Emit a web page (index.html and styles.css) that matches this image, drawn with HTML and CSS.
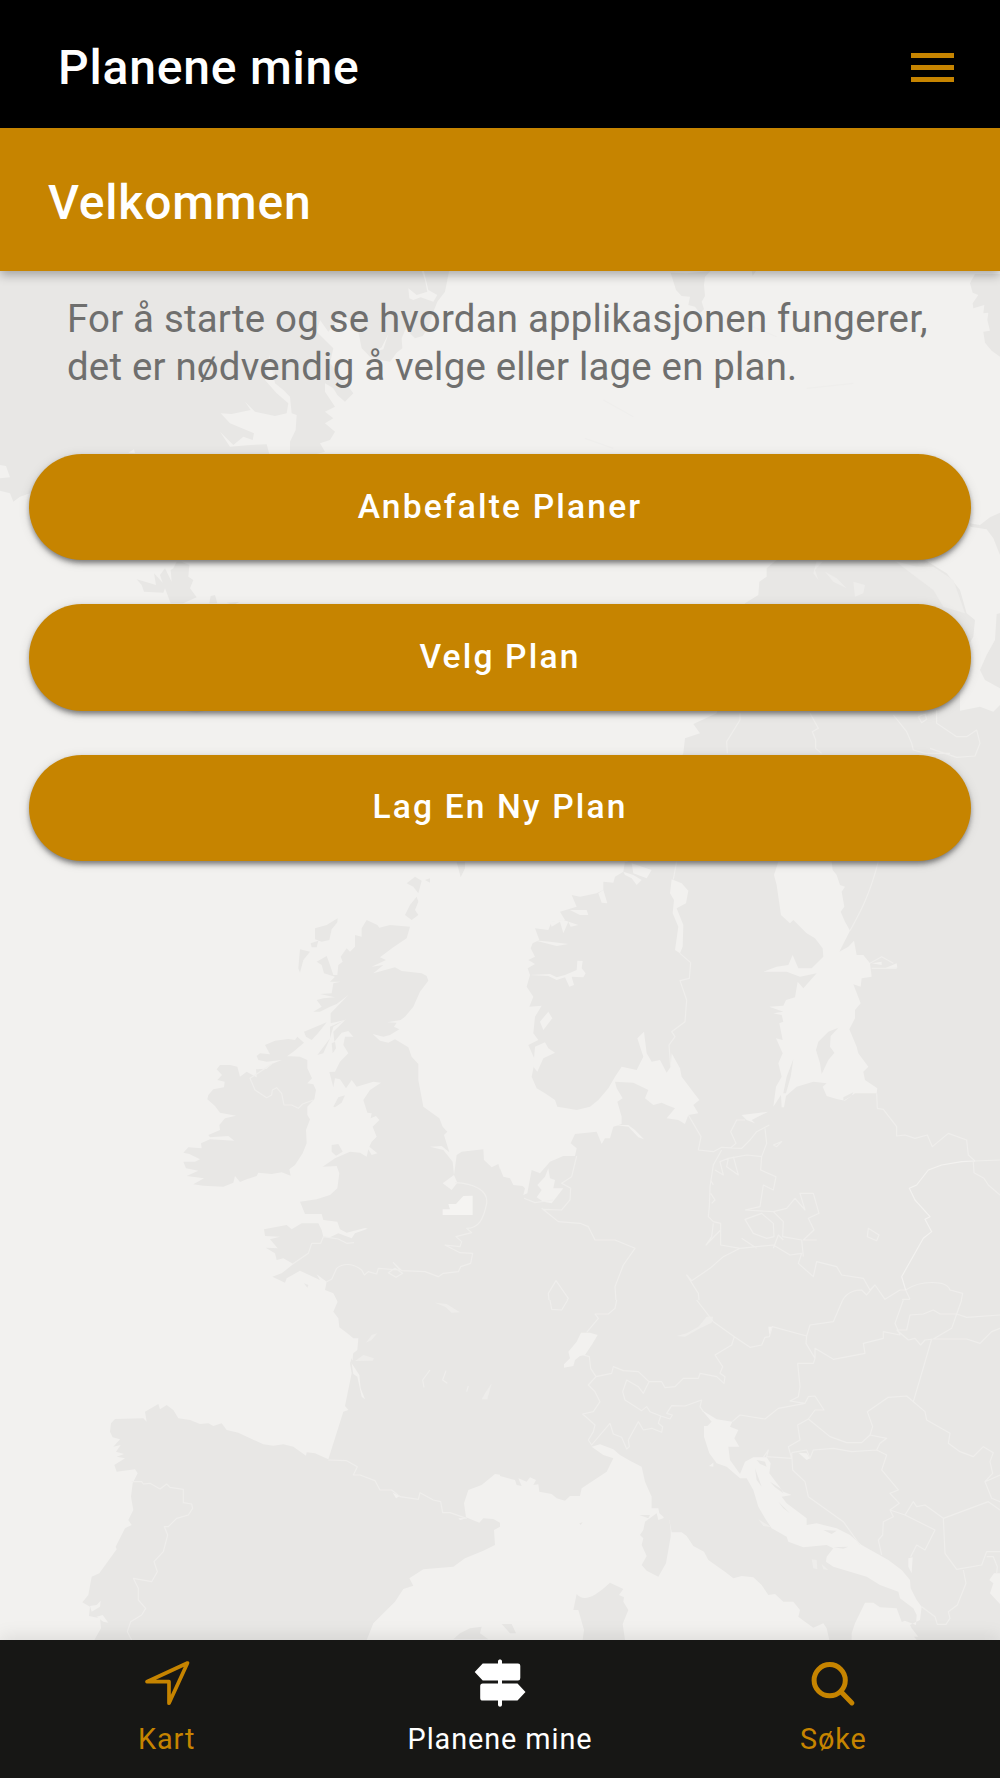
FILE: index.html
```html
<!DOCTYPE html>
<html lang="no">
<head>
    <meta charset="utf-8" />
    <title>Planene mine</title>
    <link rel="stylesheet" href="styles.css">
</head>
<body>
<div class="app">
    <!-- faded map of Europe behind the content -->
    <svg class="map" viewBox="0 0 1000 1778" aria-hidden="true">
        <!-- Greenland, Iceland -->
        <g transform="translate(0 260) scale(.33333)">
            <path class="land" d="M0 30H1348L1335 95 1312 125 1300 155 1287 200 1268 228 1245 235 1225 215 1222 195 1205 235 1207 265 1190 278 1170 305 1140 300 1110 290 1085 265 1075 215 1030 160 1005 190 985 215 960 180 950 215 1000 265 990 310 1030 360 1060 400 1035 425 1012 405 1000 385 975 370 975 395 1005 440 975 455 1000 475 975 490 1005 515 990 540 960 550 975 575 920 590H870L870 545 887 510 890 465 875 460 870 410 850 390 825 370 808 285 795 360 830 400 865 430 860 460 825 468 765 455 735 425 752 450 695 462 662 460 690 490 762 520 758 540 730 530 700 555 660 515 690 560 750 555 800 553 810 590V640L90 700 60 710 40 725 30 700 0 692Z"/>
            <path class="sea" d="M0 615 18 618 30 652 0 655ZM385 578 402 568 405 580ZM1265 33 1275 60 1282 95 1250 105 1225 85 1228 115 1240 120 1262 112 1300 125 1312 105 1285 90 1278 60 1272 33ZM1080 225 1100 240 1115 292 1100 240ZM1165 222 1145 262 1125 275 1150 268Z"/>
            <path class="land" d="M410 958 425 975 432 995 490 998 495 985 512 1030H550L590 1012 570 985 580 960 565 950 568 915 545 905 530 905 520 925 512 930 515 965 495 925 480 945 488 968 462 940 468 975ZM628 1030 632 1008 645 1005 652 1030ZM680 1028 720 1025 700 1035ZM555 1353H615L590 1358Z"/>
        </g>
        <!-- northern Scandinavia -->
        <g transform="translate(500 260) scale(.33333)">
            <path class="land" d="M512 38 560 40 632 33 615 50 612 75 615 108 605 125 612 148 600 160 585 140 565 135 570 110 545 108 528 90ZM755 33H768L758 48ZM1410 70 1425 42H1500V290L1475 272 1455 248 1450 215 1470 212 1462 180 1465 158 1450 160 1453 135 1420 145 1418 130 1435 105 1418 98ZM1500 758 1470 772 1440 795 1410 790V800L1460 808 1480 835 1500 885Z"/>
            <path class="land" d="M800 925 830 900H1275L1340 940 1380 990 1400 1060 1425 1080 1420 1130 1380 1200 1380 1352 1440 1340 1480 1355 1500 1335V1850H370L380 1810 550 1480 555 1435 600 1420 580 1392 650 1360 735 1030 775 1005 778 965 800 950Z"/>
            <path class="land" d="M1500 1060 1490 1062 1485 1140 1460 1185 1440 1230 1455 1260 1500 1285Z"/>
            <path class="lake" d="M950 903 968 905 945 930 955 960 940 940ZM975 935 1010 955 1040 985 1000 965ZM1060 965 1095 975 1090 1000 1065 1010ZM1185 903 1250 920 1300 920 1360 960 1395 1060 1330 1040 1300 990 1240 945ZM835 1040 858 1045 840 1065ZM920 1055 950 1065 925 1068ZM1020 1060 1050 1045 1030 1075Z"/>
            <path class="line" d="M720 1360V1380L680 1445 682 1480M930 1360 955 1405 937 1415 947 1440V1465L965 1480M1180 1365 1220 1415 1235 1450 1240 1470 1275 1480 1350 1480M1310 1350V1390L1370 1430 1400 1430 1430 1410 1440 1450 1425 1488 1370 1492 1290 1465M1255 1370 1275 1362 1280 1378 1265 1388ZM720 185 830 230M310 420 400 470M255 535 340 565M920 385 1060 370"/>
        </g>
        <!-- British Isles -->
        <g transform="translate(100 860) scale(.33333)">
            <path class="land" d="M360 615H390L412 620 420 650 440 635 470 652 468 628 500 626 515 612 545 600 560 588 600 590 622 600V625L636 655 622 670 640 673 648 690 643 718 622 740 622 765 630 778 618 810 620 850 608 880 585 915 568 928 572 947 545 937 515 942 475 938 470 948 440 958 420 966 405 948 400 968 370 980 310 977 280 973 312 955 260 948 295 932 258 925 250 905 285 905 300 898 268 882 250 878 265 862 305 865 303 850 330 838 403 842 385 828 330 832 325 825 360 810 358 795 375 775 408 767 360 758 345 738 322 718 325 705 340 688 372 682 374 665 352 660 366 645 350 628ZM470 588 480 580 510 583 495 555 525 542 565 537 585 540 592 530 612 548 580 575 545 600 500 605 475 600Z"/>
            <path class="land" d="M800 180 832 195 838 203 870 195 930 200 920 235 880 262 840 292 858 300 815 320 850 315 820 340 885 322 905 333 965 340 980 348 985 362 960 395 940 440 915 470 902 480 862 487 890 488 882 500 898 508 870 525 850 530 818 522 840 542 865 548 885 538 925 562 935 590 955 612V660L970 740 1018 775 1028 800 1042 815 1032 825 1048 877 1025 858 990 860 1030 870 1058 905 1062 945 1070 885 1085 875 1150 868 1152 900 1175 922 1195 912 1205 945 1230 955 1240 975 1270 980V1350H710L715 1330 700 1300 675 1290 680 1265 650 1243 660 1260 600 1232 560 1255 555 1268 517 1250 545 1240 580 1212 550 1195 530 1200 525 1180 497 1163 533 1165 510 1138 540 1130 495 1128 492 1108 560 1095 575 1108 605 1090 655 1090 665 1110 670 1130 690 1132 715 1120 755 1135 765 1120 803 1106 795 1104 740 1118 720 1108 712 1085 670 1080 665 1062 615 1062 600 1025 650 1018 690 1005 712 985 718 940 710 918 668 920 705 895 750 875 780 878 800 890 805 868 815 885 832 880 808 860 815 845 830 830 818 800 838 780 828 768 812 775 815 760 802 758 790 720 810 690 843 668 820 665 770 680 755 660 738 685 720 658 705 655 700 682 688 636 705 635 720 605 745 580 730 555 735 530 760 530 745 513 725 518 703 545 700 515 738 478 700 500 690 535 670 580 652 585 690 535V500L735 480 692 490V460L745 405 710 432 690 440 660 455 640 455 665 440 650 420 670 415 705 412 660 402 695 400 700 370 722 365 690 365 705 350 672 340 665 315 650 305 680 288 690 315 700 345 712 345 715 315 728 305 722 290 740 265 750 275 765 260V225L785 230 785 205Z"/>
            <path class="land" d="M645 205 680 195 713 175 712 187 695 208 688 240 665 245 645 238ZM632 250 655 242 650 262 635 262ZM600 268 630 275 610 300 600 338 595 325ZM920 70 945 50 965 62 955 100 940 80ZM975 60 990 55 990 68ZM915 165 930 135 950 110 955 125 945 150 955 165 935 180ZM612 515 680 487 655 518 635 540 618 530ZM695 550 705 545 708 565 698 580ZM700 740 715 712 735 706 725 728 705 742ZM695 855 715 852 728 875 708 887 695 875ZM612 1270 625 1275 622 1283ZM1070 5H1095L1095 25 1082 52Z"/>
            <path class="sea" d="M1062 945 1028 970 1055 990 1072 968Z"/>
            <path class="patch" d="M1028 1048 1050 1048 1045 1032 1068 1032 1090 1008 1118 1007V1065H1028Z"/>
            <path class="line" d="M515 612 450 655 465 690 500 713 515 705 517 690 530 683 545 700 552 735 575 735 595 745 608 732 640 720M1065 968C1120 970 1165 990 1160 1030 1150 1080 1135 1105 1100 1105L1115 1118 1068 1130 1085 1145 1080 1160 1035 1155 1080 1178 1118 1180 1112 1210 1082 1220 1075 1235 1030 1240 1015 1250 975 1235 905 1232 880 1208 900 1230 835 1225 830 1242 805 1235 793 1245 785 1230C760 1210 730 1208 710 1225L695 1258 680 1265M578 1212 625 1180 635 1150 662 1150 670 1130 715 1137 740 1150 762 1148M865 1238 885 1225 908 1240 888 1252Z"/>
        </g>
        <!-- Scandinavia, Germany, Poland -->
        <g transform="translate(500 860) scale(.33333)">
            <path class="land" d="M0 5H1500V1350H0Z"/>
            <path class="sea" d="M0 5H375L370 35 345 50 340 68 310 65 310 90 290 100 240 110 215 105 230 140 180 155 195 180 155 185 145 210 105 205 118 240 98 250 92 265 105 290 85 300 105 312 83 325 90 345 80 380 100 410 88 440 125 437 105 470 100 520 115 540 85 555 105 600 95 650 110 685 135 700 165 720 172 740 200 745 230 750 270 740 295 720 325 685 345 650 365 620 410 630 430 590 412 535 432 515 440 580 455 605 480 600 500 638 512 620 515 580 540 625 545 650 575 690 598 720 580 735 595 760 565 765 555 792 535 780 500 775 525 745 500 735 485 728 460 735 435 715 445 690 400 668 345 665 350 685 368 715 352 725 365 770 365 792 340 800 330 835 315 835 305 852 290 815 225 822 212 850 230 865 225 888 190 888 150 905 120 940 95 930 82 1000 70 1005 75 985 68 978 40 975 30 955 10 950 0 925Z"/>
            <path class="sea" d="M835 5H995L998 30 1010 45 1020 75 1035 80 1025 95 1033 140 1022 155 1035 185 1050 212 1018 275 1045 260 1062 242 1070 285 1090 285 1110 310 1115 350 1085 355 1082 380 1060 373 1082 430 1065 450 1065 475 1048 508 1070 560 1075 580 1105 620 1090 635 1095 660 1132 685 1130 700 1065 700 1035 722 1010 717 980 708 968 680 980 670 940 665 890 680 858 708 852 742 845 742 843 705 820 740 828 680 845 650 835 610 848 580 828 535 848 540 838 490 850 485 845 465 820 460 850 455 808 440 850 437 858 420 885 412 893 365 910 385 950 340 900 350 860 335 790 335 830 320 865 315 878 285 895 325 935 325 970 290 968 265 945 235 920 220 880 180 870 190 843 165 835 110 830 75 822 45ZM515 58 545 70 565 92 558 130 530 145 550 195 548 260 540 280 525 270 535 200 518 160 522 120 510 100ZM90 345 150 342 170 352 195 345 230 330 232 302 248 303 245 325 257 340 250 352 215 350 222 375 208 380 195 352 170 360 145 348ZM95 240 150 245 205 252 170 258 120 245ZM150 185 190 180 235 195 212 200 205 185 190 220 180 185 155 200ZM210 150 260 150 265 165 240 165ZM310 90 322 130 305 128 295 100ZM370 35 400 45 425 60 410 75 395 55 375 45ZM395 10 455 30 440 55 400 40ZM105 560 135 547 145 565 165 578 130 595 112 635 100 620ZM120 485 145 455 157 475 130 510ZM345 795H385L405 810 432 838 415 832 385 800ZM145 925 150 955 165 960 160 985 190 985 155 1030 130 1025 110 1012 125 990 112 975 135 950ZM725 765 805 755 755 780 765 790 740 780ZM1115 310 1145 305V315ZM1155 325 1190 310 1192 323Z"/>
            <path class="land" d="M985 515 1015 503 992 528 990 560 1003 578 985 600 965 642 960 610 948 570 955 545ZM880 598 872 650 858 700 850 700 860 650ZM1030 712 1060 697 1055 708 1030 722Z"/>
            <path class="line" d="M530 5 520 58M540 280 572 308 568 355 540 362 560 420 555 485 515 515 525 530 507 555 512 620M1135 5C1110 100 1085 150 1050 212M1110 310 1145 290 1180 310M1115 325H1190M565 765 603 830 595 870 640 875 665 862 725 865 750 840 770 815 808 795M690 865 708 850 692 815 710 780 735 780M665 870 640 915 630 980 628 1040 625 1070 640 1085 662 1090V1155L720 1165 820 1155 870 1185 905 1180 895 1210 940 1250 950 1205 1010 1220 1025 1245 1090 1255 1110 1290 1125 1275 1155 1318 1200 1290 1217 1290 1230 1318M640 1090 635 1130 618 1155 662 1110M685 895 740 885 785 890 782 930 828 950 820 990 790 975 780 1040 735 1050M785 890 800 850 795 805M645 930 670 945 660 905 685 895 680 920 715 945 700 890M735 1050 820 1055 860 1045 885 1015 915 1050 900 1000 940 1000 957 1060 925 1075 942 1110 910 1140 950 1140M735 1078 785 1060 820 1090 822 1130 800 1135 760 1120ZM820 1055 850 1085 848 1130 905 1140 910 1190M820 1165 835 1125 850 1140M725 1135 770 1165M632 960 640 975M632 1000 645 1020 635 1030M720 1165 670 1190 630 1225 575 1262 560 1245 595 1300 600 1350M125 1045 175 1085 240 1090 265 1100 285 1140 345 1140 405 1165 370 1215 345 1280 350 1350M230 888 215 950 185 970 212 985 210 1020 185 1050 130 1048M72 1015 105 1028 160 1020M1130 700 1132 745 1150 748 1190 800V828L1215 825 1245 835 1282 825 1297 860 1345 820 1400 840 1405 885 1425 903 1500 900M1420 905 1422 938 1452 955 1465 975 1500 1005M1105 1105 1137 1125 1130 1142 1102 1130ZM145 1300 168 1262 205 1315 180 1350H150ZM1018 1350C1025 1310 1050 1290 1085 1290L1100 1305 1125 1275M1217 1290C1260 1260 1340 1260 1350 1290L1388 1300 1378 1350M1230 1318 1208 1318 1200 1350M820 855 845 845 830 860Z"/>
            <path class="line bright" d="M1425 903 1385 905 1325 915 1285 930 1250 975 1228 985 1245 1020 1290 1070 1275 1078 1295 1115 1270 1135 1205 1250 1217 1290"/>
        </g>
        <!-- Iberia, France -->
        <g transform="translate(0 1300) scale(.33333)">
            <path class="land" d="M345 357 430 355 440 365 435 335 475 312 480 328 500 315 520 330 535 355 570 360 600 372 625 370 640 378 665 370 680 390 715 398 790 433 820 437 850 433 880 440 918 467 920 457 945 460 985 478 1030 335 1045 330 1035 318 1055 220 1050 190 1060 160 1072 150 1075 115 1060 115 1040 98 1018 82 1015 55 1000 35 1015 0H1500V524L1485 522 1445 555 1405 570 1392 610 1398 652 1438 668 1450 655 1480 657 1500 668V680L1482 690 1485 735 1450 752 1395 775 1360 800 1270 808 1228 835 1240 857 1210 867 1185 905 1120 970 1100 1020H283L303 985 300 955 267 948 270 920 247 907 265 885 275 830 298 820 350 748 347 740 375 685 395 675 385 660 400 630 393 590 398 550 413 520 405 508 350 515 343 495 375 475 350 470 372 462 348 455 362 435 340 440 360 418 338 412 330 395 333 370ZM1360 1018 1380 1000 1410 985 1445 980 1440 1000 1465 1018Z"/>
            <path class="sea" d="M270 918 290 915 302 902 300 920 275 935ZM290 950 308 945 325 968 310 965ZM1055 190 1078 225 1082 265 1095 298 1085 290 1072 230 1060 222ZM1178 578 1200 588 1188 595ZM1375 655 1400 655 1380 660ZM1035 120 1060 130 1058 182 1045 155Z"/>
            <path class="lake" d="M1065 183 1090 165 1122 175 1118 182ZM1098 128 1115 105 1132 100 1115 120ZM1305 8 1340 12 1380 37 1355 38 1335 20ZM1445 298 1455 280 1475 250 1462 298Z"/>
            <path class="line" d="M395 545 425 545 430 552 450 550 480 567 500 552 510 562 550 568V608L575 612 578 625 565 645 530 655 505 680H493L503 705 490 755 462 785 472 815 455 845 400 835 415 865V900L437 925 425 945 392 965 382 995 395 1020M985 480 1040 482 1072 500 1060 525 1080 525 1125 542 1140 570 1175 570 1200 590 1255 598 1260 578 1300 600 1322 605 1328 638 1350 638 1400 655M1290 210 1268 240 1272 262M1338 212 1328 240 1342 250M1405 258 1400 275"/>
        </g>
        <!-- Italy, the Alps, the Balkans -->
        <g transform="translate(500 1300) scale(.33333)">
            <path class="land" d="M0 0H1500V1020H0Z"/>
            <path class="sea" d="M0 528 45 540 50 555 65 558 55 535 80 545 90 532 108 540 100 555 115 553 118 575 155 582 170 595 195 602 210 588 240 588 245 565 320 515 340 475 310 465 275 440 300 433 340 448 360 465 390 482 425 500 435 545 455 590V625H475L478 640 490 650 508 660 515 697 545 697 560 708 580 738 612 755 625 780 660 805 675 815 700 835 725 828 760 832 785 855 805 885 825 882 850 905 880 905 900 930 895 950 915 965 940 983 970 970 980 985 988 1020H0Z"/>
            <path class="land" d="M470 640 475 660 490 655 503 620 512 690 512 710 498 790 475 830 440 812 425 795 440 768 425 735 430 715 420 705 430 690 435 665ZM418 645 450 645 445 655ZM230 882C250 905 280 895 330 848L370 867 357 885 372 892 370 905 385 930 368 972 375 1020H248L252 990 235 930H220ZM5 972 35 972 48 1000 30 1000ZM238 670 248 667 242 675Z"/>
            <path class="sea" d="M605 330 650 358 697 365 690 380 715 390 703 415 718 440 685 440 690 480 720 522 735 485 760 472 800 472 812 490 808 520 850 575 875 585 845 590 860 610 920 655V675L950 670 1010 685 1050 705 1085 735 1165 780 1205 810 1230 840 1232 865 1250 900 1265 920 1260 960 1230 975 1235 985 1255 1010 1240 1010 1195 970 1215 962 1248 975 1250 945 1240 925 1200 895 1195 875 1140 855 1100 830 1000 800 978 785 980 770 1000 745 980 735 910 742 865 725 860 710 815 685 795 655 775 620 760 570 740 535 720 535 680 500 650 490 628 460 612 410V378H622L635 365ZM1055 1020 1055 1000 1065 970 1095 908 1120 908 1140 922 1190 925 1205 965 1250 1020ZM243 98 270 98 293 105 275 135 255 165 240 168 225 180 220 198 192 203V193L210 175 205 155 230 125ZM1500 820 1482 820 1468 840 1480 850 1470 880 1500 912ZM895 458 920 460 930 475 920 480ZM805 80H817L808 105ZM1225 775 1238 772 1235 820 1225 800ZM640 488V500L627 498Z"/>
            <path class="land" d="M770 480 795 485 800 500 780 492ZM810 545 845 568 850 580 825 562ZM970 690 1010 692 995 702ZM1000 742 1045 740 1030 746ZM765 505 785 560 770 540ZM835 605 870 640 850 625Z"/>
            <path class="lake" d="M530 108 560 100 595 80 620 50 640 50 635 68 600 85 555 110ZM935 778 950 780 952 808 940 805ZM965 792 985 810 970 808ZM775 658 815 682 790 678Z"/>
            <path class="line" d="M150 0 155 28 185 30 203 0M350 0 345 25 325 42 285 42 295 55 260 97M250 165 268 170 272 205 288 230 265 255 285 275 300 305 280 335 248 342 285 375 280 395 265 420 275 435 300 405 330 370 340 402 365 412 380 447 388 440 385 420 415 365 430 390 455 385 485 397 488 380 475 370 482 348 450 335 440 320 425 332 375 300 368 275 380 240 415 260 430 280 447 245M288 230 335 220 340 200 370 212 415 215 447 245H485L495 263 525 260 550 235 595 235 600 220 650 230 672 250 675 230 660 220 668 200 645 165 695 135 703 110 640 65 590 0M703 110 750 142 785 135 795 112 808 110 817 80 920 108M482 348 510 357 517 345 500 340 515 317 555 318 605 300 600 320 610 335M697 365 720 345 795 357 835 325 915 310 870 303 895 290 900 260 893 190 940 190 945 175 918 130 920 108 930 75 1000 65 1028 0M945 175 945 145 1000 178 1095 160 1090 130 1150 115V95L1200 105 1185 70 1210 0M1190 90 1220 90 1230 45 1270 42 1300 30 1320 42 1370 42 1385 0M1370 42 1400 52 1500 45M1190 90 1225 120 1245 115 1262 135 1275 120 1300 117 1355 85 1370 42M1300 117H1400L1440 130 1475 95 1500 85M1295 117 1268 210 1240 305M870 303 915 310 925 290 945 288 972 330 945 330 925 357 893 375 900 420 865 440 875 475 800 470 805 450 790 472M925 357 990 410 1040 428 1085 428 1110 405 1160 415 1140 430 1130 450M875 458 920 450 930 475 940 450 1000 445 1055 455 1130 450 1160 465 1145 510 1195 570 1170 580 1198 610 1170 630 1180 650 1150 665 1148 705 1135 720 1145 765M875 458 878 510 915 545 925 590 1030 665 1080 735M1110 405 1118 380 1102 335 1165 292 1220 288 1275 335 1280 360 1350 400 1345 430 1380 455 1420 470 1450 440 1480 458 1470 485 1478 520 1455 545 1475 595 1500 605M1455 545 1500 525M1170 630 1215 645 1240 605 1250 620 1275 615 1330 655 1465 605 1500 630M1215 645 1305 690 1275 750 1250 735 1232 770M1330 655 1335 760 1370 808 1445 795 1460 755 1500 755M1460 770 1480 770 1492 800 1490 820M1390 810 1398 850 1372 915 1345 935 1350 955 1338 973H1312L1305 950 1265 920"/>
        </g>
    </svg>

    <header class="toolbar">
        <h1>Planene mine</h1>
        <button class="menu-button" aria-label="Meny"><span></span><span></span><span></span></button>
    </header>
    <div class="welcome">
        <h2>Velkommen</h2>
    </div>

    <main class="content">
        <p class="intro">For å starte og se hvordan applikasjonen fungerer, det er nødvendig å velge eller lage en plan.</p>
        <div class="buttons">
            <button class="plan-button">Anbefalte Planer</button>
            <button class="plan-button">Velg Plan</button>
            <button class="plan-button">Lag En Ny Plan</button>
        </div>
    </main>

    <nav class="tabs">
        <a class="tab">
            <svg width="52" height="52" viewBox="0 0 52 52">
                <path class="stroke" d="M46.5 6 6 24.700H28V46.200Z"/>
            </svg>
            <span>Kart</span>
        </a>
        <a class="tab active">
            <svg width="52" height="52" viewBox="0 0 52 52">
                <path d="M24 4.200C24 2 28 2 28 4.200V6.400H44Q46.300 6.400 46.300 8.700V21Q46.300 23.500 44 23.500H28V26.500H43.500L51.500 35 43.500 43.600H28V47.500C28 50.500 24 50.500 24 47.500V43.600H8.700Q6.200 43.600 6.200 41V29Q6.200 26.500 8.700 26.500H24V23.500H8.700L.700 15 8.700 6.400H24Z"/>
            </svg>
            <span>Planene mine</span>
        </a>
        <a class="tab">
            <svg width="52" height="52" viewBox="0 0 52 52">
                <circle class="ring" cx="22.700" cy="23.200" r="15.600"/>
                <path class="ring" d="M34.300 35.100 44.900 45.900"/>
            </svg>
            <span>Søke</span>
        </a>
    </nav>
</div>
</body>
</html>
```
FILE: styles.css
```css
* {
    box-sizing: border-box;
}

body {
    margin: 0;
    font-family: Roboto, "Liberation Sans", sans-serif;
    background-color: #f2f1ef;
}

.app {
    position: relative;
    display: flex;
    flex-direction: column;
    height: 1778px;
    overflow: hidden;
}

/* map */
.map {
    position: absolute;
    top: 0;
    left: 0;
    width: 1000px;
    height: 1778px;
}
.map .land { fill: #e8e7e5; }
.map .sea { fill: #f2f1ef; }
.map .lake { fill: #eeedeb; }
.map .patch { fill: #f5f4f2; }
.map .line {
    fill: none;
    stroke: #efeeec;
    stroke-width: 3.5;
    stroke-linejoin: round;
}
.map .bright { stroke: #f3f2f0; }

/* top bars */
.toolbar, .welcome, .content, .tabs {
    position: relative;
}

.toolbar {
    display: flex;
    align-items: center;
    justify-content: space-between;
    height: 128px;
    padding: 8px 46px 0 58px;
    background-color: #000;
}

h1, h2 {
    margin: 0;
    font-size: 48px;
    font-weight: 500;
    line-height: 56px;
    letter-spacing: 0.8px;
    color: #fff;
}

.menu-button {
    display: flex;
    flex-direction: column;
    gap: 7px;
    padding: 0 0 2px;
    border: 0;
    background: none;
}
.menu-button span {
    width: 43px;
    height: 5px;
    background-color: #c68400;
}

.welcome {
    height: 143px;
    padding: 47px 48px 0;
    background-color: #c68400;
    box-shadow: 0 4px 10px rgba(0, 0, 0, 0.3);
}

/* content */
.content {
    flex: 1;
    padding: 24px 29px 0;
}

.intro {
    margin: 0;
    padding: 0 30px 0 38px;
    font-size: 38.4px;
    line-height: 48px;
    letter-spacing: 0.21px;
    color: #6f6f6e;
}

.buttons {
    display: flex;
    flex-direction: column;
    gap: 44px;
    margin-top: 63px;
}

.plan-button {
    height: 106.4px;
    padding: 0 0 2px;
    border: 0;
    border-radius: 53px;
    background-color: #c68400;
    box-shadow: 0 7px 5px -5px rgba(0, 0, 0, 0.2), 0 5px 5px rgba(0, 0, 0, 0.14), 0 2px 12px rgba(0, 0, 0, 0.12), 0 2px 4px rgba(0, 0, 0, 0.2);
    color: #fff;
    font-family: inherit;
    font-size: 33.6px;
    font-weight: 500;
    letter-spacing: 2.15px;
}

/* bottom tabs */
.tabs {
    display: flex;
    height: 138px;
    background-color: #171715;
    box-shadow: 0 -2px 18px rgba(0, 0, 0, 0.1);
}

.tab {
    flex: 1;
    display: flex;
    flex-direction: column;
    align-items: center;
    padding-top: 17px;
    color: #c68400;
    font-size: 28.8px;
    line-height: 34px;
    letter-spacing: 0.93px;
}
.tab span {
    margin-top: 13px;
}
.tab svg {
    fill: currentColor;
}
.tab .stroke {
    fill: none;
    stroke: currentColor;
    stroke-width: 3.7;
    stroke-linejoin: round;
}
.tab .ring {
    fill: none;
    stroke: currentColor;
    stroke-width: 5;
    stroke-linecap: round;
}
.active {
    color: #fff;
}
```
